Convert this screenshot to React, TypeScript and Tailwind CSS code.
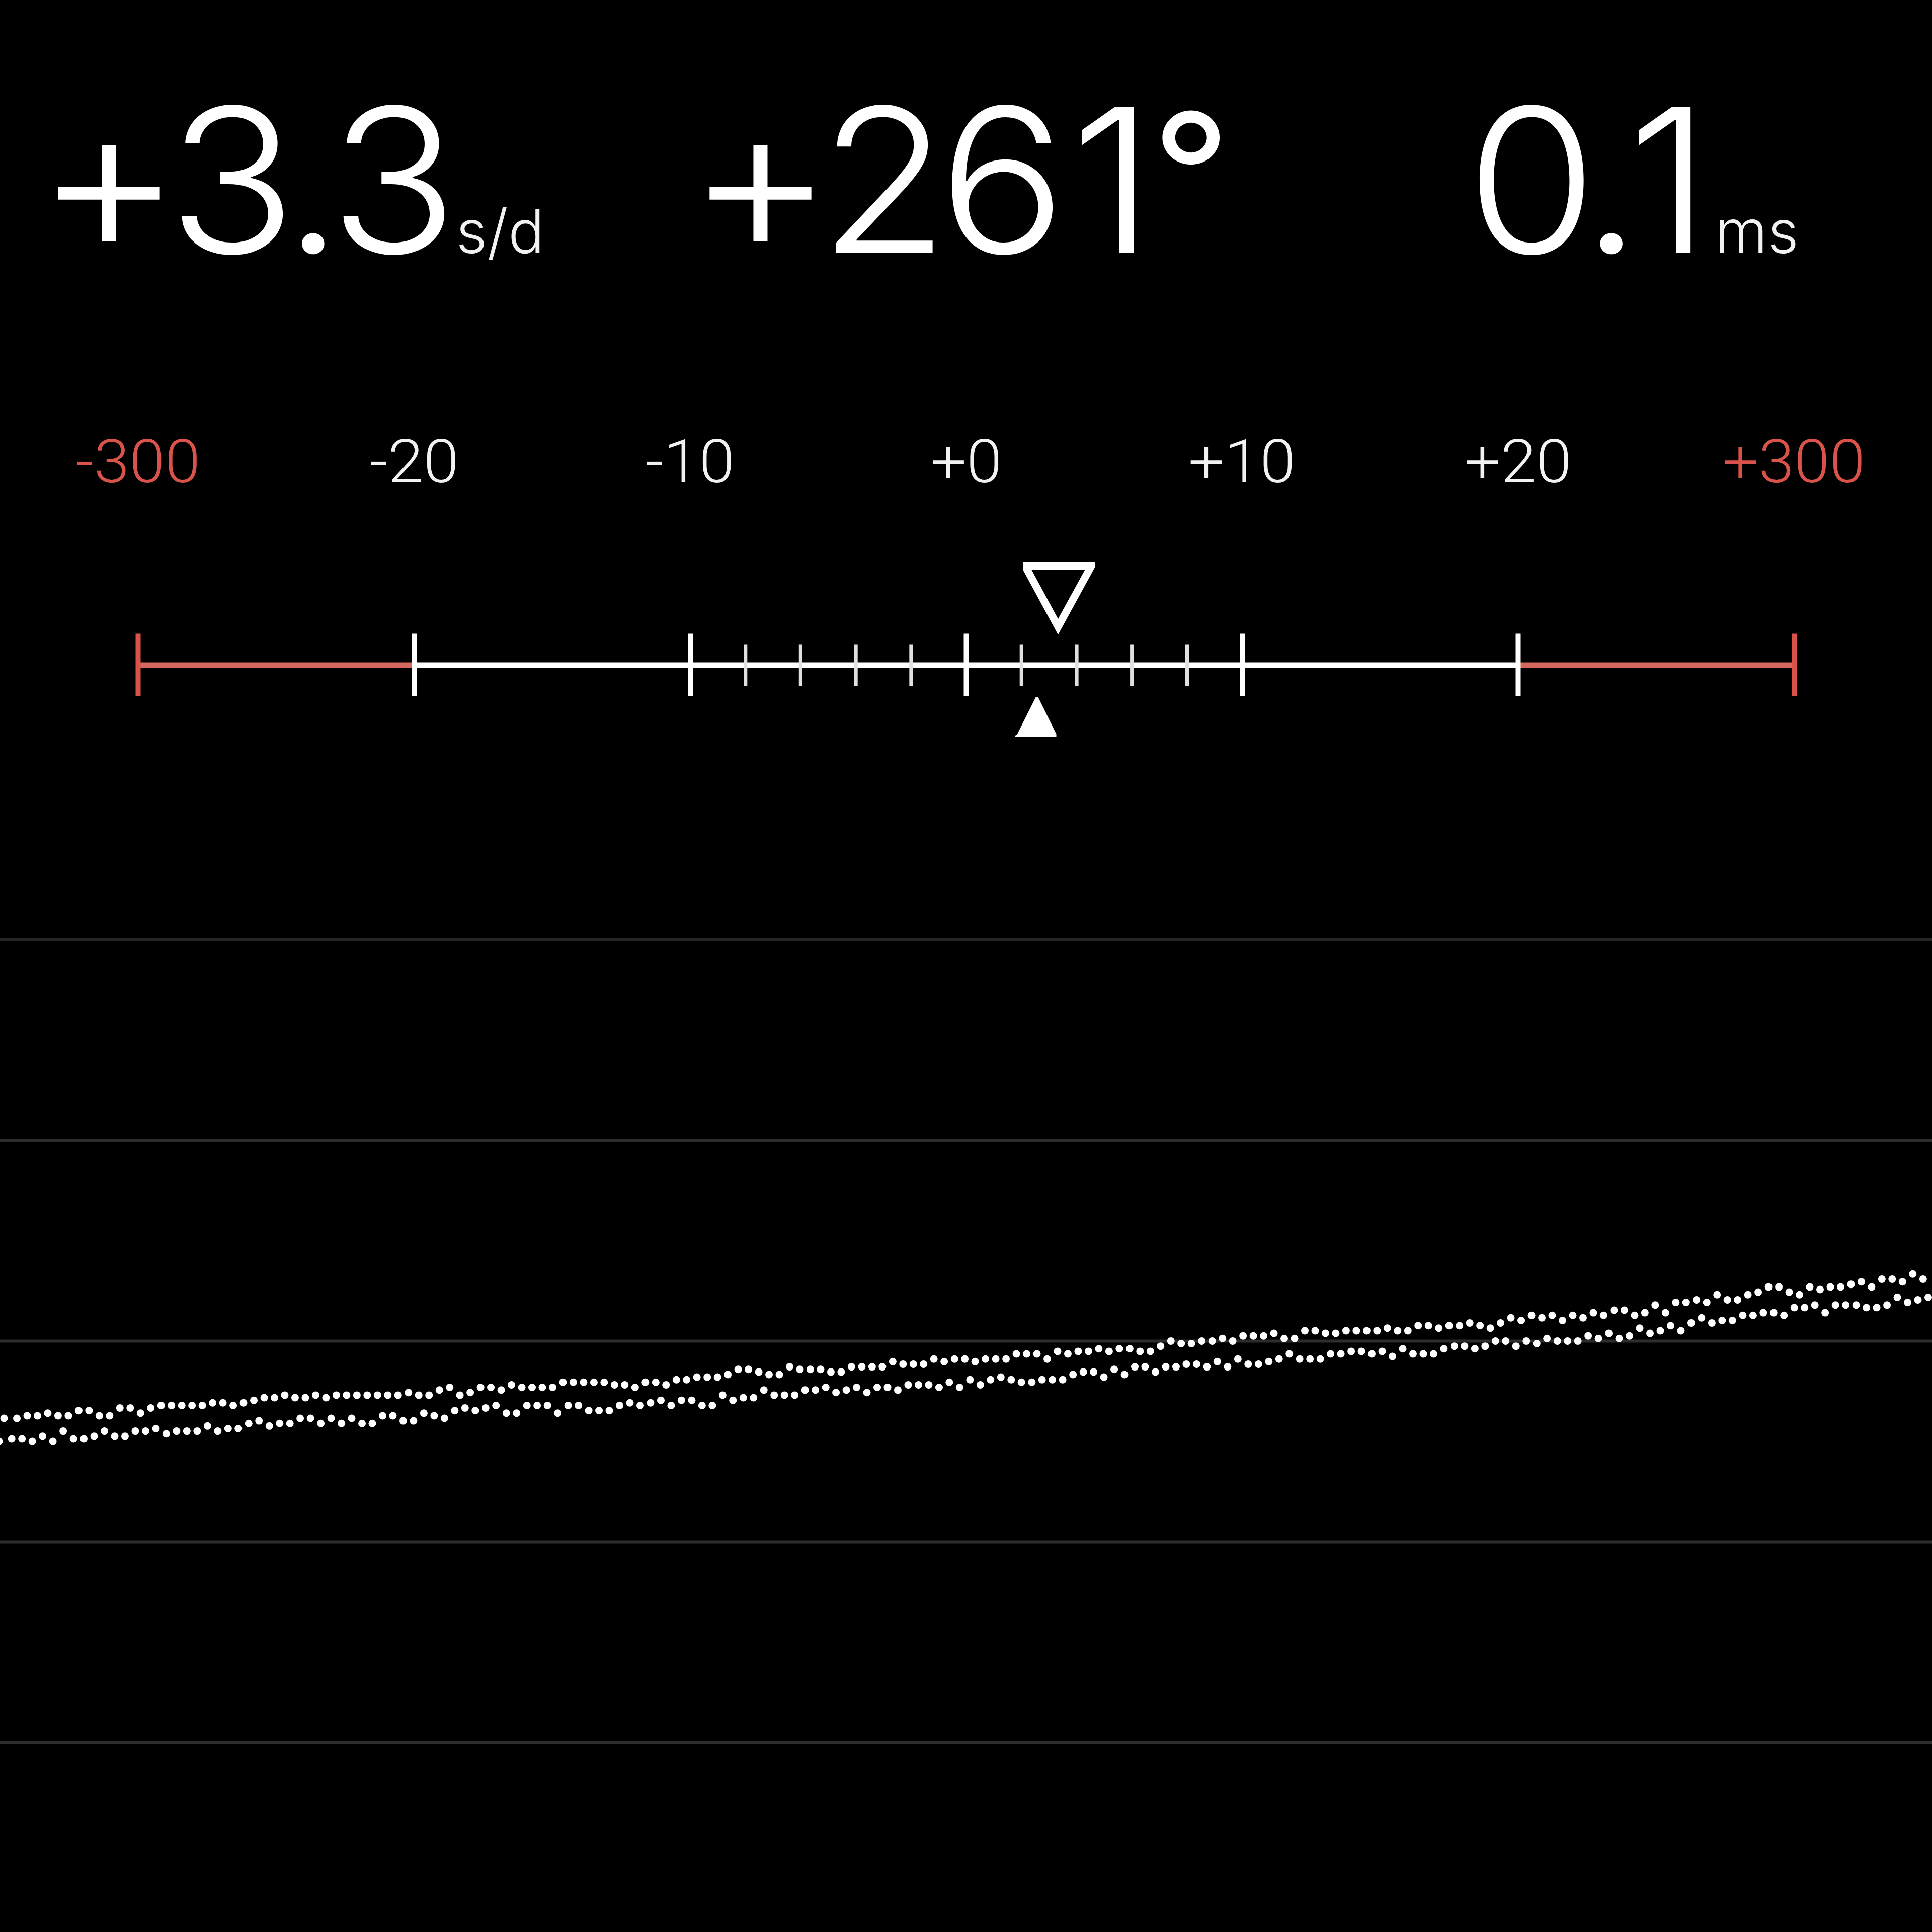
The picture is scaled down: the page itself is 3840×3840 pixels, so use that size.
type Glyph = { char: string; className: string }

type Readout = {
  glyphs: Glyph[]
  unit?: string
  className: string
  unitClassName?: string
}

const READOUTS: Readout[] = [
  {
    glyphs: [
      { char: '+', className: 'relative top-[2px] text-[425px] leading-[0] tracking-[-28px]' },
      { char: '3', className: 'tracking-[-25px]' },
      { char: '.', className: 'tracking-[-26px]' },
      { char: '3', className: '' },
    ],
    unit: 's/d',
    className: 'pl-[70px]',
    unitClassName: 'ml-[40px]',
  },
  {
    glyphs: [
      { char: '+', className: 'relative top-[2px] text-[425px] leading-[0] tracking-[-29px]' },
      { char: '2', className: 'tracking-[-20px]' },
      { char: '6', className: 'tracking-[8px]' },
      { char: '1', className: 'tracking-[-5px]' },
      { char: '°', className: 'relative top-[-43px] text-[328px] leading-[0] font-normal' },
    ],
    className: 'pl-[85px]',
  },
  {
    glyphs: [
      { char: '0', className: 'tracking-[-30px]' },
      { char: '.', className: 'tracking-[-26px]' },
      { char: '1', className: '' },
    ],
    unit: 'ms',
    className: 'pl-[354px]',
    unitClassName: 'ml-[33px]',
  },
]

const LABELS = ['-300', '-20', '-10', '+0', '+10', '+20', '+300']

const MAJOR_TICKS = [823.5, 1372, 1920.5, 2469, 3017.5]
const MINOR_TICKS = [1481.7, 1591.4, 1701.1, 1810.9, 2030.3, 2140, 2249.7, 2359.4]
const LIMIT_TICKS = [274.5, 3566]

const GRID_LINES = [1868, 2267, 2665.5, 3064.5, 3463.5]

// Beat offsets in steps, one per beat, counted up from BASELINE
const TICK_BEATS = [
  0, 0, 1, 1, 2, 1, 1, 3, 3, 1, 1, 4, 4, 2, 4, 5, 5, 5, 5, 5, 6, 6, 5, 6, 7, 8, 8, 9, 8, 8, 9, 8, 9, 9, 9, 9, 9, 9, 9,
  10, 9, 9, 11, 12, 9, 10, 12, 12, 11, 13, 12, 12, 12, 12, 14, 14, 14, 14, 14, 13, 13, 12, 14, 14, 13, 15, 15, 16, 16,
  16, 17, 19, 19, 18, 17, 17, 20, 19, 19, 19, 18, 18, 20, 20, 20, 20, 22, 21, 21, 21, 23, 22, 23, 23, 22, 23, 23, 23,
  25, 25, 25, 23, 26, 25, 26, 26, 27, 26, 27, 27, 26, 26, 28, 30, 29, 29, 30, 30, 31, 30, 32, 32, 32, 33, 31, 31, 34,
  34, 33, 33, 34, 34, 34, 34, 35, 34, 34, 36, 36, 35, 36, 36, 37, 36, 35, 37, 39, 38, 40, 39, 40, 38, 40, 39, 41, 40,
  42, 42, 40, 41, 44, 41, 45, 45, 46, 45, 48, 46, 46, 48, 49, 51, 51, 49, 48, 51, 50, 51, 51, 52, 53, 51, 54, 54, 53,
  56, 54,
]

const TOCK_BEATS = [
  -9, -8, -8, -9, -7, -9, -5, -8, -8, -7, -5, -7, -7, -5, -5, -4, -6, -5, -5, -5, -3, -5, -4, -4, -2, -1, -3, -2, -2, 0,
  0, -2, 0, -2, 0, -2, -2, 1, 1, -1, -1, 2, 1, 0, 3, 4, 3, 4, 5, 2, 2, 5, 5, 5, 2, 5, 5, 3, 3, 3, 5, 6, 5, 6, 7, 5, 7,
  7, 5, 5, 9, 7, 8, 8, 11, 9, 9, 9, 11, 11, 12, 10, 11, 12, 10, 12, 12, 11, 13, 13, 13, 12, 14, 12, 15, 13, 15, 16, 15,
  14, 14, 15, 15, 15, 17, 18, 18, 16, 19, 17, 20, 20, 18, 20, 20, 21, 21, 20, 22, 20, 23, 21, 21, 22, 23, 25, 23, 23,
  23, 25, 25, 26, 26, 25, 26, 24, 27, 25, 25, 25, 27, 28, 28, 27, 28, 30, 30, 28, 30, 29, 31, 30, 30, 30, 32, 31, 33,
  31, 32, 35, 33, 34, 36, 34, 37, 39, 37, 38, 38, 40, 40, 41, 41, 40, 43, 43, 44, 41, 44, 44, 44, 43, 43, 44, 47, 45,
  46, 47,
]

const STEP = 5.12
const BASELINE = 2819

const Beats = ({ beats, first, start }: { beats: number[]; first: number; start: number }) => (
  <g fill="#fff">
    {beats.map((level, i) => (
      <circle
        key={i}
        cx={i === 0 ? first : start + (i - 1) * STEP * 4}
        cy={BASELINE - level * STEP}
        r={7.5}
      />
    ))}
  </g>
)

const Gauge = () => (
  <svg className="block h-[500px] w-full" viewBox="0 1050 3840 500">
    <rect x={274} y={1316.5} width={550} height={10.5} fill="#d4685f" />
    <rect x={3017} y={1316.5} width={550} height={10.5} fill="#d4685f" />
    <rect x={823} y={1316.5} width={2195} height={10.5} fill="#fff" />
    {LIMIT_TICKS.map((x) => (
      <rect key={x} x={x - 5} y={1259.5} width={10} height={124} fill="#d9534b" />
    ))}
    {MAJOR_TICKS.map((x) => (
      <rect key={x} x={x - 5} y={1259.5} width={10} height={124} fill="#fff" />
    ))}
    {MINOR_TICKS.map((x) => (
      <rect key={x} x={x - 3.6} y={1280.5} width={7.2} height={82.5} fill="#e0e0e0" />
    ))}
    {/* Current rate */}
    <svg x={2033} y={1116.5} width={144} height={144.5} viewBox="2033 1116.5 144 144.5">
      <path
        d="M2037.4 1124.5H2169.3L2103 1245.7Z"
        fill="none"
        stroke="#fff"
        strokeWidth={15}
        strokeLinejoin="miter"
      />
    </svg>
    {/* Average rate */}
    <path d="M2058.5 1386H2063.5L2099.5 1459V1465H2018V1462L2022 1459Z" fill="#fff" />
  </svg>
)

const Trace = () => (
  <svg className="block h-[2290px] w-full" viewBox="0 1550 3840 2290">
    {GRID_LINES.map((y, i) => (
      <rect key={y} x={0} y={y - 3} width={3840} height={6} fill={i === 0 ? '#262626' : '#2d2d2d'} />
    ))}
    <Beats beats={TICK_BEATS} first={8} start={33.5} />
    <Beats beats={TOCK_BEATS} first={-2} start={23.2} />
  </svg>
)

export default function App() {
  return (
    <main className="flex h-[3840px] w-[3840px] flex-col overflow-hidden bg-black font-['Inter','Liberation_Sans',sans-serif] text-white">
      <header className="grid h-[800px] grid-cols-3 pt-[157px]">
        {READOUTS.map(({ glyphs, unit, className, unitClassName }) => (
          <div key={className} className={`flex items-baseline whitespace-nowrap leading-none font-light ${className}`}>
            <span className="origin-left scale-x-[1.055] text-[400px] leading-none">
              {glyphs.map(({ char, className: glyphClassName }, i) => (
                <span key={i} className={glyphClassName}>{char}</span>
              ))}
            </span>
            {unit && <span className={`text-[120px] leading-none text-[#f2f2f2] ${unitClassName}`}>{unit}</span>}
          </div>
        ))}
      </header>

      <div className="grid h-[250px] grid-cols-7 pt-[58px] text-center font-['Roboto','Liberation_Sans',sans-serif] text-[121px] leading-[121px] font-light">
        {LABELS.map((label) => (
          <span
            key={label}
            className={`scale-x-[1.05] ${label.endsWith('300') ? 'text-[#d9534b]' : 'text-[#f2f2f2]'}`}
          >
            {label}
          </span>
        ))}
      </div>

      <Gauge />
      <Trace />
    </main>
  )
}
